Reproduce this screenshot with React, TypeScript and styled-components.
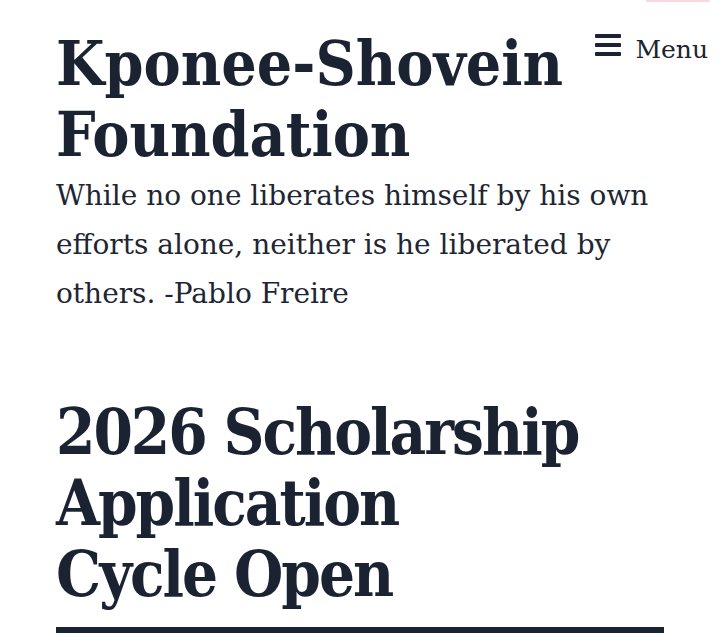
import React from 'react'
import styled, { createGlobalStyle } from 'styled-components'

const GlobalStyle = createGlobalStyle`
  html, body {
    margin: 0;
    padding: 0;
    background: #ffffff;
  }
  body {
    font-family: "DejaVu Serif", "Liberation Serif", serif;
    color: #1b2332;
  }
`

const Page = styled.div`
  width: 720px;
  min-height: 640px;
  overflow: hidden;
`

const TopStrip = styled.div`
  display: flex;
  justify-content: flex-end;
  padding-right: 10px;
`

const StripMark = styled.span`
  display: block;
  width: 64px;
  height: 2px;
  background: #f9d9de;
`

const Header = styled.header`
  display: grid;
  grid-template-columns: 1fr auto;
  align-items: start;
  padding: 26px 12px 0 56px;
`

const SiteTitle = styled.h1`
  margin: 0;
  font-family: "DejaVu Serif Condensed", "DejaVu Serif", serif;
  font-size: 62px;
  line-height: 71px;
  font-weight: 700;
  color: #1b2332;
`

const Line = styled.span`
  display: block;
  white-space: nowrap;
`

const Tagline = styled.p`
  grid-column: 1 / -1;
  margin: 1px 44px 0 0;
  font-size: 28px;
  line-height: 49px;
  font-weight: 400;
  color: #1f2633;
`

const MenuButton = styled.button`
  display: flex;
  align-items: center;
  gap: 14px;
  margin-top: 7px;
  padding: 0;
  border: 0;
  background: none;
  font-family: inherit;
  font-size: 25px;
  line-height: 30px;
  color: #1b2332;
  cursor: pointer;
`

const Burger = styled.span`
  display: flex;
  flex-direction: column;
  gap: 5px;
  width: 26px;
  margin-top: -11px;

  & > i {
    display: block;
    height: 4px;
    background: #1b2332;
    border-radius: 1px;
  }
`

const Main = styled.main`
  padding: 79px 56px 0 56px;
`

const EntryTitle = styled.h2`
  margin: 0;
  font-family: "DejaVu Serif Condensed", "DejaVu Serif", serif;
  font-size: 63px;
  line-height: 71px;
  letter-spacing: -2px;
  font-weight: 700;
  color: #1b2332;
`

const Rule = styled.hr`
  margin: 17px 0 0;
  height: 6px;
  border: 0;
  background: #1b2332;
`

const App = () => {
  return (
    <>
      <GlobalStyle />
      <Page>
        <TopStrip>
          <StripMark />
        </TopStrip>
        <Header>
          <SiteTitle>
            <Line>Kponee-Shovein</Line>
            <Line>Foundation</Line>
          </SiteTitle>
          <MenuButton type="button">
            <Burger>
              <i />
              <i />
              <i />
            </Burger>
            Menu
          </MenuButton>
          <Tagline>
            While no one liberates himself by his own efforts alone, neither is he liberated by others. -Pablo Freire
          </Tagline>
        </Header>
        <Main>
          <EntryTitle>
            <Line>2026 Scholarship</Line>
            <Line>Application</Line>
            <Line>Cycle Open</Line>
          </EntryTitle>
          <Rule />
        </Main>
      </Page>
    </>
  )
}

export default App
